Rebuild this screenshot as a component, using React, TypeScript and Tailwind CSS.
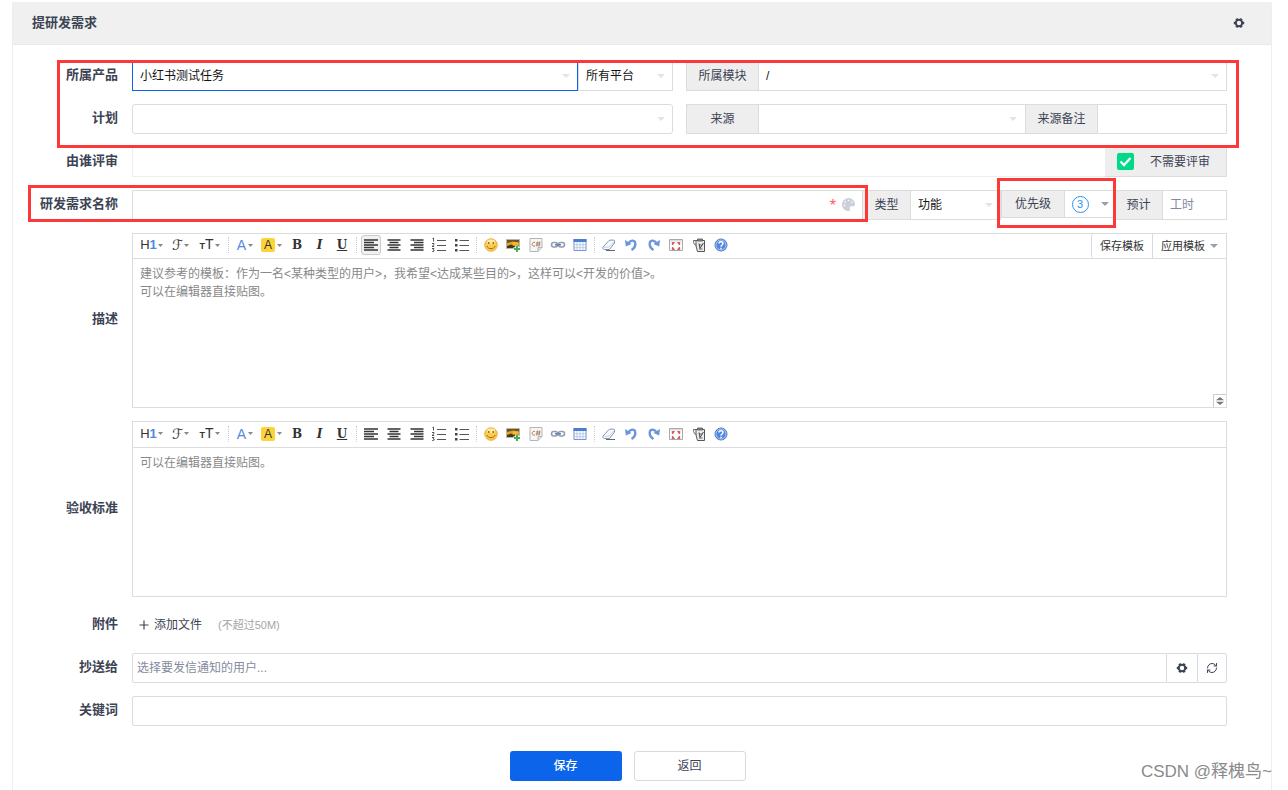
import type { ReactNode } from "react"
import { FaPalette } from "react-icons/fa"
import { LuPlus, LuRefreshCw } from "react-icons/lu"

const addon = "flex shrink-0 items-center justify-center border border-[#dcdcdc] bg-[#eeeeee] text-[#3c4353]"
const input = "h-full w-full min-w-0 border border-[#dcdcdc] bg-white px-[7px] text-xs text-[#141414] outline-none placeholder:text-[#838a9d]"

function Gear() {
  return (
    <svg width="12" height="12" viewBox="0 0 12 12" fill="none" stroke="#3c4353">
      <circle cx="6" cy="6" r="3.200" strokeWidth="2" />
      <path d="M.8 6h2M9.200 6h2M3.400 1.600l.8 1.400M7.800 9l.8 1.400M8.600 1.600L7.800 3M4.200 9l-.8 1.400" strokeWidth="2.400" />
    </svg>
  )
}

function Caret({ className = "text-[#9aa0ab]" }: { className?: string }) {
  return (
    <svg width="8" height="4" viewBox="0 0 8 4" className={`shrink-0 ${className}`}>
      <path d="M0 0h8L4 4z" fill="currentColor" />
    </svg>
  )
}

function SmallCaret() {
  return (
    <svg width="5" height="3" viewBox="0 0 5 3" className="shrink-0">
      <path d="M0 0h5L2.500 3z" fill="#888" />
    </svg>
  )
}

function Select({ id, label, value, className = "", border = "border-[#dcdcdc]" }: { id: string; label?: string; value?: string; className?: string; border?: string }) {
  return (
    <div className={`relative h-full ${className}`}>
      <select id={id} aria-label={label} className={`h-full w-full appearance-none border bg-white px-[7px] text-xs text-[#141414] outline-none ${border}`}>
        <option>{value}</option>
      </select>
      <span className="pointer-events-none absolute inset-y-0 right-2 flex items-center">
        <Caret className="text-[#e1e4e9]" />
      </span>
    </div>
  )
}

function Label({ htmlFor, children }: { htmlFor: string; children: ReactNode }) {
  return (
    <label htmlFor={htmlFor} className="w-[105px] shrink-0 self-center pb-[3px] text-right text-[13px] font-bold text-[#3c4353]">
      {children}
    </label>
  )
}

function Row({ id, label, children }: { id: string; label: string; children: ReactNode }) {
  return (
    <div className="flex gap-[14px]">
      <Label htmlFor={id}>{label}</Label>
      <div className="min-w-0 flex-1">{children}</div>
    </div>
  )
}

function Icon({ children }: { children: ReactNode }) {
  return (
    <svg width="16" height="16" viewBox="0 0 16 16" fill="none">
      {children}
    </svg>
  )
}

const lines = (d: string) => <Icon><path d={d} stroke="#333" strokeWidth="1.500" /></Icon>

const alignTools = [
  { name: "左对齐", icon: lines("M1 3h14M1 5.500h10M1 8h14M1 10.500h10M1 13h14") },
  { name: "居中", icon: lines("M1.500 3h13M3.500 5.500h9M1.500 8h13M3.500 10.500h9M1.500 13h13") },
  { name: "右对齐", icon: lines("M1.500 3h13M5 5.500h9.500M1.500 8h13M5 10.500h9.500M1.500 13h13") },
  {
    name: "编号",
    icon: (
      <Icon>
        <path d="M6 3.500h9M6 8.500h9M6 13.500h9" stroke="#555" />
        <path d="M1.500 1.500l1-.5v3.500M1 6.500h2v1.200L1 9.500h2.200M1 11.500h2L2 13c2 0 1.500 2-.8 1.500" stroke="#444" strokeWidth=".9" />
      </Icon>
    ),
  },
  {
    name: "项目符号",
    icon: (
      <Icon>
        <path d="M5.500 3.500H15M5.500 8.500H15M5.500 13.500H15" stroke="#555" />
        <path d="M1 2h2.500v2.500H1zM1 7h2.500v2.500H1zM1 12h2.500v2.500H1z" fill="#444" />
      </Icon>
    ),
  },
]

const insertTools = [
  {
    name: "表情",
    icon: (
      <Icon>
        <circle cx="8" cy="8" r="6.300" fill="#fbcd4e" stroke="#dfa331" strokeWidth=".8" />
        <ellipse cx="8" cy="4.800" rx="4" ry="2.200" fill="#fee9a4" />
        <path d="M5.800 5v2M10.200 5v2" stroke="#8a5413" strokeWidth="1.200" />
        <path d="M3.800 9c1.500 3.600 6.900 3.600 8.400 0" stroke="#a35e12" />
      </Icon>
    ),
  },
  {
    name: "图片",
    icon: (
      <Icon>
        <path d="M1.500 2.500h13v9h-13z" fill="#eba11f" stroke="#b5b5b5" />
        <path d="M2 3h12v2.500L8 4.500 2 6z" fill="#6b5420" />
        <path d="M2 9l4-1.500 3 1.500 5-1v3H2z" fill="#40391c" />
        <path d="M8 5.500h5v2H8z" fill="#f7bf37" />
        <path d="M12 8.500v7M8.500 12h7" stroke="#fff" strokeWidth="3.600" />
        <path d="M12 9v6M9 12h6" stroke="#47ae4d" strokeWidth="2" />
      </Icon>
    ),
  },
  {
    name: "代码",
    icon: (
      <Icon>
        <path d="M2 1.500h12v9l-4 4H2z" fill="#f6f6f6" stroke="#b5b5b5" />
        <path d="M10 14.500v-4h4" fill="#ddd" stroke="#b5b5b5" />
        <path d="M7 5.500c-3-1.500-4.500 4.500 0 3.500M9.500 4.500l-.7 5M11.700 4.500l-.7 5M8 6h4.500M7.700 8h4.500" stroke="#b08363" />
      </Icon>
    ),
  },
  {
    name: "链接",
    icon: (
      <Icon>
        <rect x="1.500" y="5.500" width="6" height="4.500" rx="2.200" stroke="#8e9db8" strokeWidth="1.600" />
        <rect x="8.500" y="5.500" width="6" height="4.500" rx="2.200" stroke="#8e9db8" strokeWidth="1.600" />
        <path d="M5 7.800h6" stroke="#71829f" strokeWidth="1.600" />
      </Icon>
    ),
  },
  {
    name: "表格",
    icon: (
      <Icon>
        <path d="M2 2.500h12v11H2z" fill="#fff" stroke="#6f90cc" />
        <path d="M1.500 2h13v3h-13z" fill="#4c7dcf" />
        <path d="M2 7.800h12M2 10.700h12M5 5v8.500M8 5v8.500M11 5v8.500" stroke="#a9c0e6" strokeWidth=".8" />
      </Icon>
    ),
  },
]

const editTools = [
  {
    name: "清除格式",
    icon: (
      <Icon>
        <path d="M2 10l6-6.500c.5-.6 5.500-.6 5.500 0V6l-5 6.500H3.500C2 12.500 1.500 11 2 10z" fill="#f5f8fd" stroke="#8695b2" />
        <path d="M2.500 10.300l5.700-.3 5-5.500" stroke="#c1cadb" strokeWidth=".8" />
        <path d="M5 13.500h9" stroke="#666" />
      </Icon>
    ),
  },
  {
    name: "撤销",
    icon: (
      <Icon>
        <path d="M5 7.500C7 2.500 12 2.500 12.300 6.500c.2 3-1.300 5-3.800 6.500" stroke="#6c95dc" strokeWidth="2.400" />
        <path d="M2 3l.8 6.500L8.500 7z" fill="#6c95dc" />
      </Icon>
    ),
  },
  {
    name: "重做",
    icon: (
      <Icon>
        <path d="M11 7.500C9 2.500 4 2.500 3.700 6.500c-.2 3 1.300 5 3.800 6.500" stroke="#6c95dc" strokeWidth="2.400" />
        <path d="M14 3l-.8 6.500L7.500 7z" fill="#6c95dc" />
      </Icon>
    ),
  },
  {
    name: "全屏",
    icon: (
      <Icon>
        <path d="M1.500 2.500h13v11h-13z" fill="#fff" stroke="#a9a9a9" />
        <path d="M2 3h12v1.500H2z" fill="#ddd" />
        <path d="M4 5.500h2.500L4.500 8zM12 5.500H9.500l2 2.500zM4 12.500h2.500l-2-2.500zM12 12.500H9.500l2-2.500z" fill="#c94242" stroke="#d45454" strokeWidth=".8" />
      </Icon>
    ),
  },
  {
    name: "源代码",
    icon: (
      <Icon>
        <path d="M5 3.500h8.500v11H6.500L5 9z" fill="#ececec" stroke="#555" />
        <path d="M6.500 2h5v2h-5z" fill="#888" stroke="#555" strokeWidth=".8" />
        <path d="M6 3.500H2.500c0 3 .8 4.500 3 5M8 8h3M8 12h3.500" stroke="#666" />
        <path d="M8 6.500l1 5L12.500 6" stroke="#444" />
      </Icon>
    ),
  },
  {
    name: "帮助",
    icon: (
      <Icon>
        <circle cx="8" cy="8" r="6" fill="#4f86de" stroke="#4976bd" />
        <circle cx="8" cy="8" r="5" stroke="#c7daf7" strokeWidth=".8" />
        <path d="M6 6.500c0-2.500 4-2.500 4 0C10 8 8 8 8 9.700M8 10.700v1.500" stroke="#fff" strokeWidth="1.500" />
      </Icon>
    ),
  },
]

function Tools({ tools, active, className }: { tools: { name: string; icon: ReactNode }[]; active?: string; className: string }) {
  return (
    <div className={`flex shrink-0 justify-between ${className}`}>
      {tools.map((tool) => (
        <button
          key={tool.name}
          type="button"
          title={tool.name}
          className={`flex h-5 w-5 items-center justify-center rounded-[3px] ${tool.name === active ? "border border-[#ccc] bg-[#f1f1f1]" : ""}`}
        >
          {tool.icon}
        </button>
      ))}
    </div>
  )
}

function Separator() {
  return <span className="mx-1 h-4 w-px shrink-0 border-l border-dotted border-[#ccc]" />
}

function Toolbar({ active, className, children }: { active?: string; className: string; children?: ReactNode }) {
  return (
    <div className={`flex justify-between border-b border-[#dcdcdc] text-[#333] ${className}`}>
      <div className="flex items-center pb-[2px] pl-1">
        <div className="flex shrink-0">
          <button type="button" className="flex w-[29px] items-center justify-center gap-px text-[13px] leading-5">
            <span>H<span className="font-bold text-[#5287e6]">1</span></span><SmallCaret />
          </button>
          <button type="button" className="flex w-[29px] items-center justify-center gap-px font-['DejaVu_Sans'] text-sm leading-5">
            ℱ<SmallCaret />
          </button>
          <button type="button" className="flex w-[29px] items-center justify-center gap-px text-sm leading-5">
            <span><span className="text-[9px] font-bold">T</span>T</span><SmallCaret />
          </button>
        </div>
        <Separator />
        <div className="flex shrink-0 gap-[2px]">
          <button type="button" className="flex w-6 items-center justify-center gap-[2px] text-sm leading-5 text-[#5287e6]">
            A<SmallCaret />
          </button>
          <button type="button" className="flex w-[26px] items-center gap-[2px] pl-[2px] text-xs leading-5">
            <span className="w-[14px] shrink-0 rounded-[2px] bg-[#fdd338] text-center leading-[14px]">A</span><SmallCaret />
          </button>
        </div>
        <div className="ml-[2px] flex w-[65px] shrink-0 justify-between font-['DejaVu_Serif'] text-xs leading-5 font-bold">
          <button type="button" className="w-5">B</button>
          <button type="button" className="w-5 italic">I</button>
          <button type="button" className="w-5 underline">U</button>
        </div>
        <Separator />
        <Tools tools={alignTools} active={active} className="w-[111px]" />
        <Separator />
        <Tools tools={insertTools} className="w-[109px]" />
        <Separator />
        <Tools tools={editTools} className="w-[132px]" />
      </div>
      {children}
    </div>
  )
}

export default function App() {
  return (
    <div className="relative min-h-screen bg-white pt-[2px] pr-4 pl-3 font-['Liberation_Sans','Noto_Sans_CJK_SC',sans-serif] text-xs text-[#3c4353]">
      <main className="min-h-[calc(100vh-2px)] border-x border-[#eeeeee]">
        <header className="flex h-[43px] items-center justify-between border-b border-[#e9e9e9] bg-[#f0f0f0] pr-[26px] pl-[19px]">
          <h1 className="text-[13px] font-bold">提研发需求</h1>
          <button type="button" title="设置"><Gear /></button>
        </header>

        <form className="flex flex-col gap-[13px] pt-4 pr-11">
          <div className="relative flex flex-col gap-[13px]">
            <Row id="product" label="所属产品">
              <div className="grid h-[30px] grid-cols-2 gap-[13px]">
                <div className="flex">
                  <Select id="product" value="小红书测试任务" className="flex-1" border="border-[#0c64eb]" />
                  <Select id="branch" label="平台" value="所有平台" className="w-[95px]" />
                </div>
                <div className="flex">
                  <label htmlFor="module" className={`w-[72px] border-r-0 ${addon}`}>所属模块</label>
                  <Select id="module" value="/" className="flex-1" />
                </div>
              </div>
            </Row>
            <Row id="plan" label="计划">
              <div className="grid h-[30px] grid-cols-2 gap-[13px]">
                <Select id="plan" border="rounded-[3px] border-[#dcdcdc]" />
                <div className="flex">
                  <label htmlFor="source" className={`w-[72px] border-r-0 ${addon}`}>来源</label>
                  <Select id="source" className="flex-1" border="border-r-0 border-[#dcdcdc]" />
                  <label htmlFor="sourceNote" className={`w-[72px] border-r-0 ${addon}`}>来源备注</label>
                  <div className="w-[130px]"><input id="sourceNote" className={input} /></div>
                </div>
              </div>
            </Row>
            <div className="pointer-events-none absolute -top-px right-[-12px] bottom-[-14px] left-11 z-10 border-3 border-[#fc3838]" />
          </div>

          <Row id="reviewer" label="由谁评审">
            <div className="flex h-[30px]">
              <input id="reviewer" className="min-w-0 flex-1 border border-r-0 border-[#eeeeee] px-[7px] outline-none" />
              <label className="flex w-[122px] items-center border-r border-b border-[#dcdcdc] bg-[#eeeeee] pl-3">
                <input type="checkbox" defaultChecked className="peer h-[17px] w-[17px] appearance-none rounded-[2px] bg-[#00da88]" />
                <svg width="17" height="17" viewBox="0 0 17 17" className="-ml-[17px] hidden peer-checked:block">
                  <path d="M3.500 8.500l3.500 3.500 6.500-7" fill="none" stroke="#fff" strokeWidth="2.300" />
                </svg>
                <span className="ml-4">不需要评审</span>
              </label>
            </div>
          </Row>

          <div className="flex h-[30px]">
            <div className="relative flex min-w-0 flex-1 gap-[14px]">
              <Label htmlFor="title">研发需求名称</Label>
              <div className="relative min-w-0 flex-1">
                <input id="title" className={input} />
                <span className="absolute inset-y-0 right-2 flex items-center gap-[6px] pb-[2px]">
                  <span className="pt-[3px] text-base leading-4 text-[#ff5d5d]">*</span>
                  <button type="button" title="颜色"><FaPalette size={13} color="#cbd0db" /></button>
                </span>
              </div>
              <div className="pointer-events-none absolute -top-[5px] right-[-5px] bottom-[-2px] left-[15px] z-10 border-3 border-[#fc3838]" />
            </div>
            <label htmlFor="category" className={`w-[47px] border-x-0 ${addon}`}>类型</label>
            <Select id="category" value="功能" className="w-[91px]" />
            <div className="relative flex h-7">
              <span className={`w-16 ${addon}`}>优先级</span>
              <button type="button" className="flex w-[50px] items-center justify-center gap-3 border-y border-[#dcdcdc] bg-white">
                <span className="flex h-[17px] w-[17px] items-center justify-center rounded-full border border-[#2b94ee] text-[11px] text-[#2b94ee]">3</span>
                <Caret />
              </button>
              <div className="pointer-events-none absolute -top-3 right-[-1px] bottom-[-10px] left-[-4px] z-10 border-3 border-[#fc3838]" />
            </div>
            <label htmlFor="estimate" className={`w-[47px] border-x-0 ${addon}`}>预计</label>
            <div className="w-[65px]"><input id="estimate" placeholder="工时" className={input} /></div>
          </div>

          <Row id="spec" label="描述">
            <div className="relative h-[175px] border border-[#dcdcdc]">
              <Toolbar active="左对齐" className="h-[25px]">
                <div className="flex shrink-0 text-[11px]">
                  <button type="button" className="w-[61px] rounded-l-[3px] border-l border-[#d6dae3]">保存模板</button>
                  <button type="button" className="flex w-[74px] items-center justify-center gap-[5px] border-l border-[#d6dae3]">
                    应用模板<Caret />
                  </button>
                </div>
              </Toolbar>
              <textarea
                id="spec"
                className="block h-[148px] w-full resize-none px-[7px] py-[6px] leading-[18px] outline-none placeholder:text-[#888]"
                placeholder={"建议参考的模板：作为一名<某种类型的用户>，我希望<达成某些目的>，这样可以<开发的价值>。\n可以在编辑器直接贴图。"}
              />
              <button type="button" title="调整高度" className="absolute right-0 bottom-0 flex h-[13px] w-[13px] items-center justify-center border-t border-l border-[#ccc] bg-white">
                <svg width="8" height="8" viewBox="0 0 8 8"><path d="M0 3.300L4 0l4 3.300zM0 4.700h8L4 8z" fill="#777" /></svg>
              </button>
            </div>
          </Row>

          <Row id="verify" label="验收标准">
            <div className="h-44 border border-[#dcdcdc]">
              <Toolbar className="h-[26px]" />
              <textarea
                id="verify"
                className="block h-[148px] w-full resize-none px-[7px] py-[6px] leading-[18px] outline-none placeholder:text-[#888]"
                placeholder="可以在编辑器直接贴图。"
              />
            </div>
          </Row>

          <Row id="files" label="附件">
            <div className="flex h-[30px] items-center gap-4 pl-[5px]">
              <button id="files" type="button" className="flex items-center gap-[3px]">
                <LuPlus size={14} />添加文件
              </button>
              <span className="text-[11px] text-[#a6a6a6]">(不超过50M)</span>
            </div>
          </Row>

          <Row id="mailto" label="抄送给">
            <div className="flex h-[30px]">
              <input id="mailto" placeholder="选择要发信通知的用户..." className="min-w-0 flex-1 rounded-l-[2px] border border-[#dcdcdc] px-1 outline-none placeholder:text-[#838a9d]" />
              <button type="button" title="设置" className="flex w-[30px] items-center justify-center border-y border-[#d6dae3]"><Gear /></button>
              <button type="button" title="刷新" className="flex w-[30px] items-center justify-center rounded-r-[2px] border border-[#d6dae3]"><LuRefreshCw size={12} /></button>
            </div>
          </Row>

          <Row id="keywords" label="关键词">
            <div className="h-[30px]"><input id="keywords" className={`rounded-[2px] ${input}`} /></div>
          </Row>

          <div className="flex justify-center gap-3 pt-3 pl-[15px]">
            <button type="submit" className="h-[30px] w-28 rounded-[3px] bg-[#0c64eb] font-medium text-white">保存</button>
            <button type="button" className="h-[30px] w-28 rounded-[3px] border border-[#d6dae3] bg-white">返回</button>
          </div>
        </form>
      </main>
      <span className="pointer-events-none absolute right-4 bottom-[6px] text-[17px] leading-6 text-[#8a8a8a]">CSDN @释槐鸟~</span>
    </div>
  )
}
